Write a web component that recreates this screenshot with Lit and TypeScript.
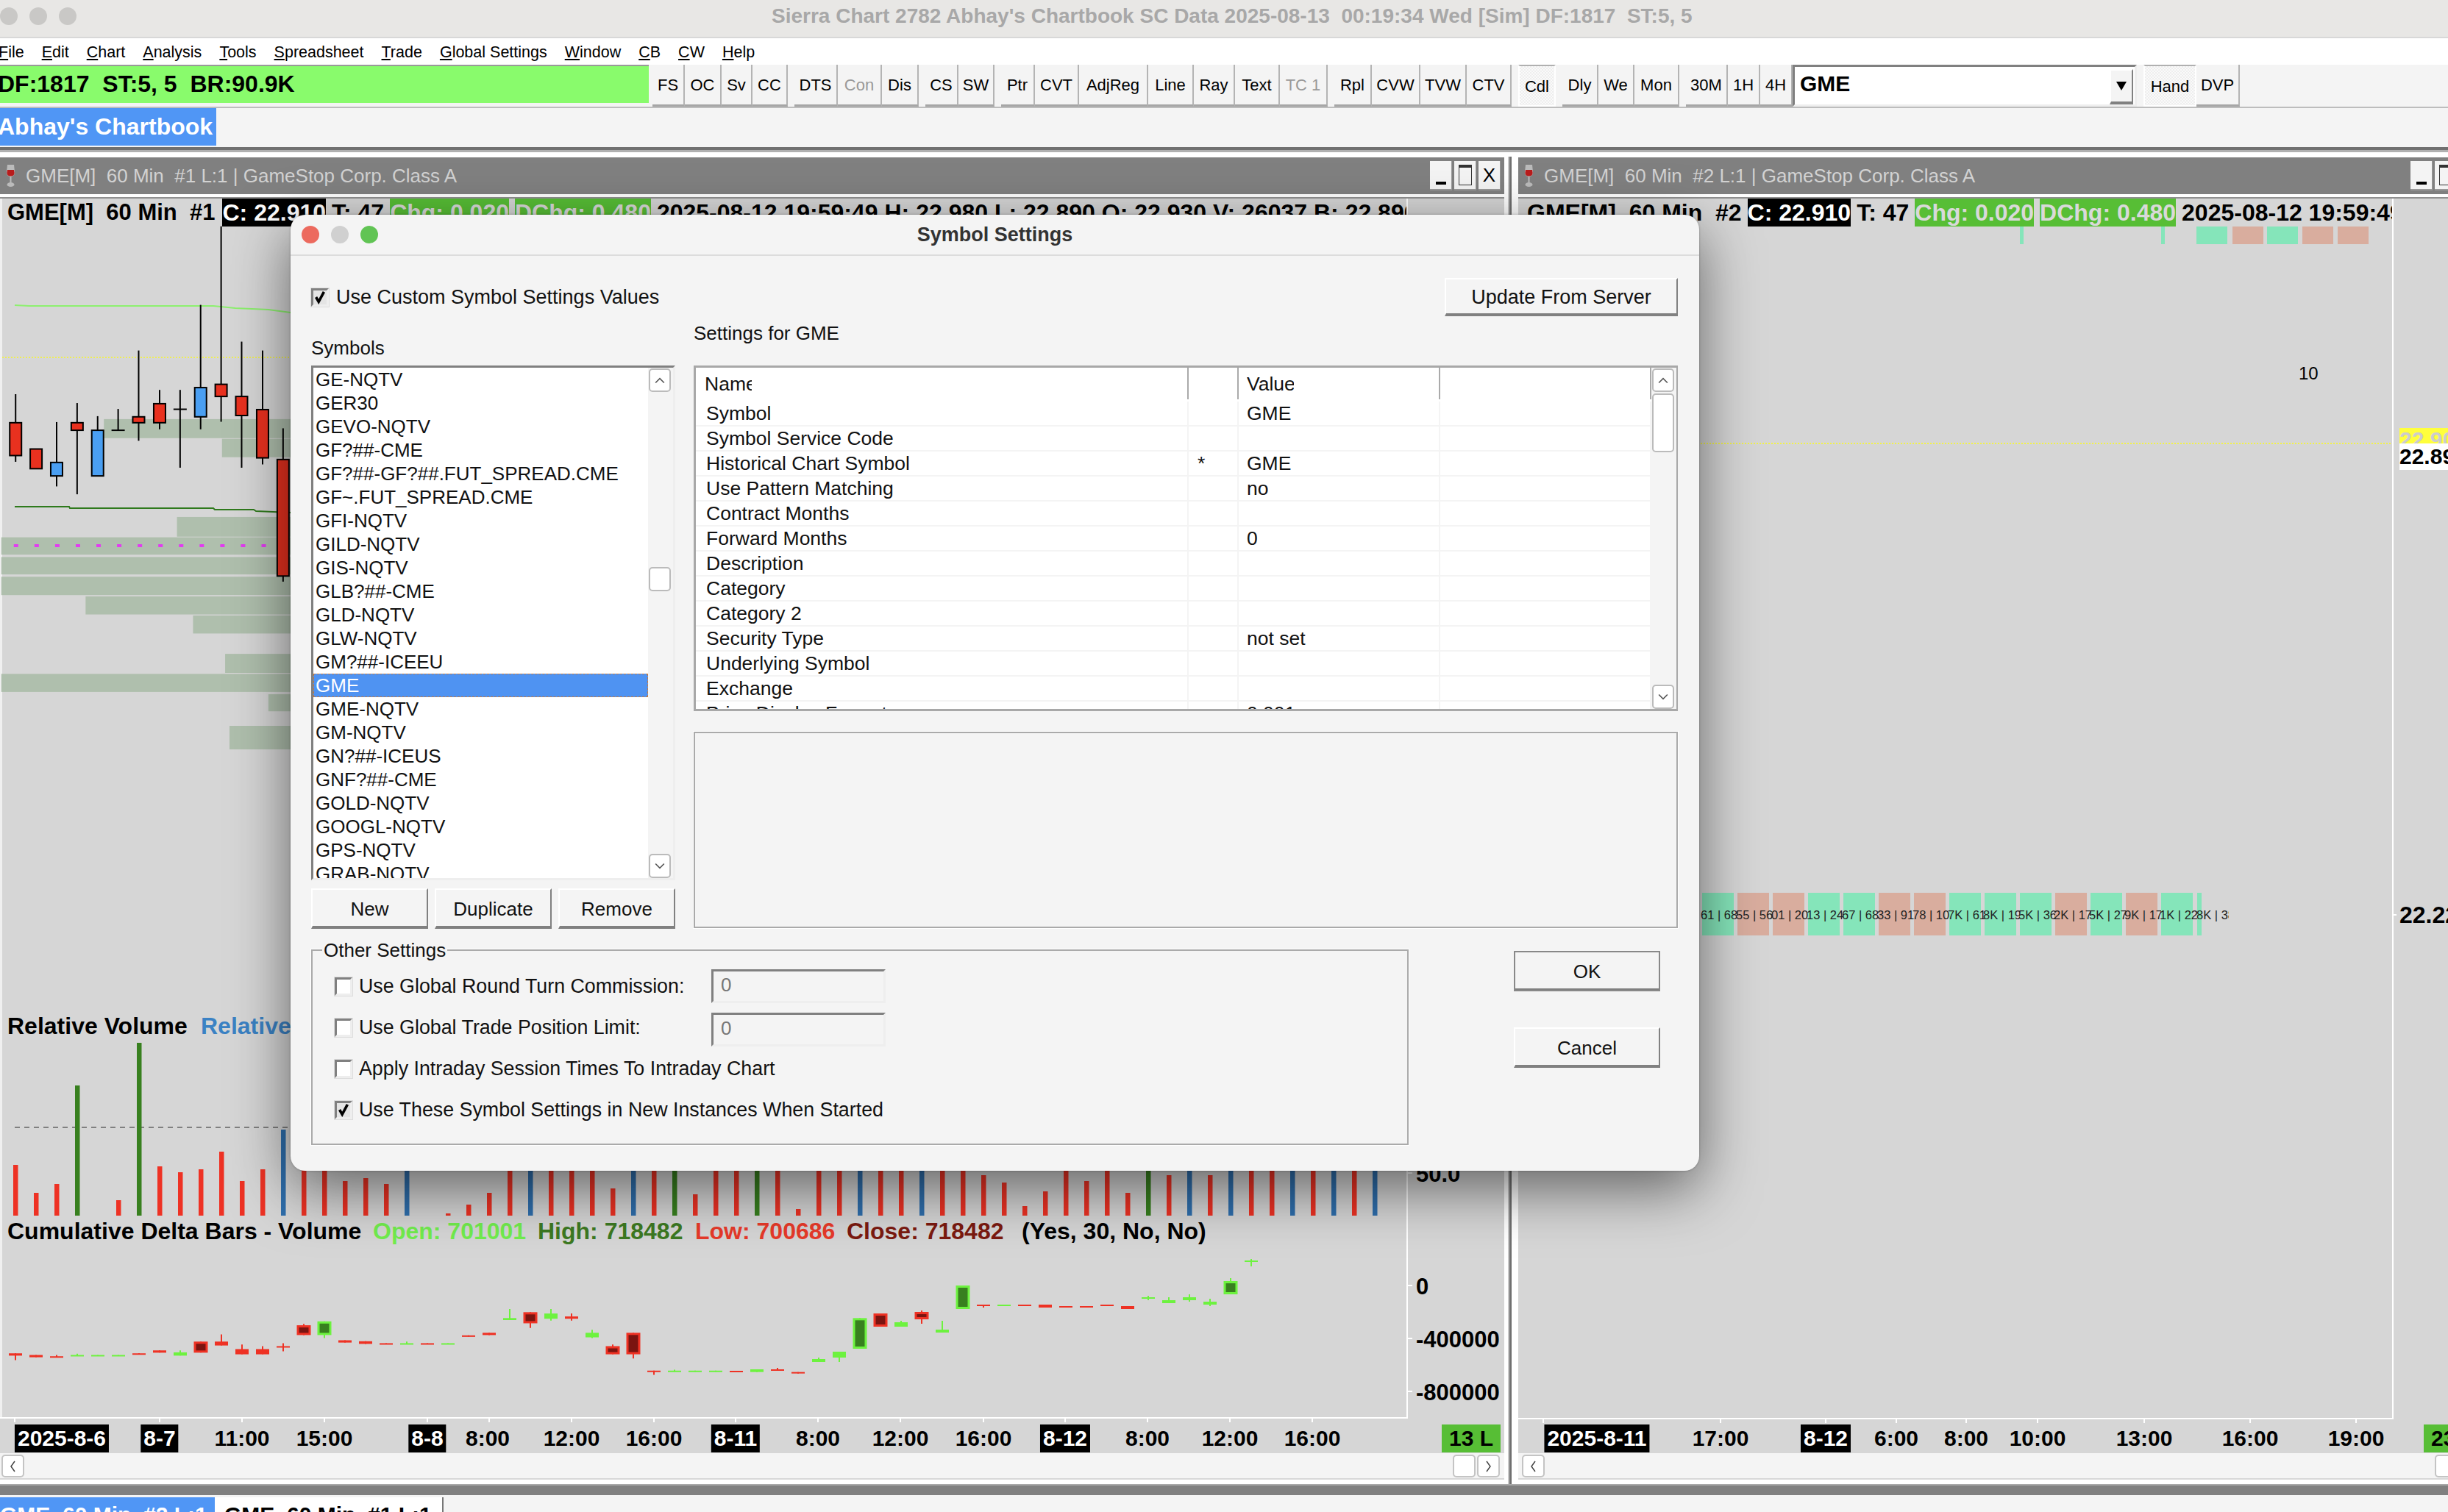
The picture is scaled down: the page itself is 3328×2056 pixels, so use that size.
import { LitElement, css, html, svg } from "lit";
import { customElement } from "lit/decorators.js";

type Btn = [string, number, string?];

const TOOL_GROUPS: Btn[][] = [
  [["FS", 44], ["OC", 50], ["Sv", 42], ["CC", 48]],
  [["DTS", 59], ["Con", 60, "off"], ["Dis", 50]],
  [["CS", 45], ["SW", 49]],
  [["Ptr", 46], ["CVT", 60], ["AdjReg", 94], ["Line", 62], ["Ray", 56], ["Text", 61], ["TC 1", 65, "off"]],
  [["Rpl", 51], ["CVW", 66], ["TVW", 63], ["CTV", 61]],
  [["Cdl", 51, "on"]],
  [["Dly", 49], ["We", 49], ["Mon", 61]],
];

const MENU = ["File", "Edit", "Chart", "Analysis", "Tools", "Spreadsheet", "Trade", "Global Settings", "Window", "CB", "CW", "Help"];

const SYMBOLS = [
  "GE-NQTV", "GER30", "GEVO-NQTV", "GF?##-CME", "GF?##-GF?##.FUT_SPREAD.CME", "GF~.FUT_SPREAD.CME", "GFI-NQTV", "GILD-NQTV",
  "GIS-NQTV", "GLB?##-CME", "GLD-NQTV", "GLW-NQTV", "GM?##-ICEEU", "GME", "GME-NQTV", "GM-NQTV", "GN?##-ICEUS", "GNF?##-CME",
  "GOLD-NQTV", "GOOGL-NQTV", "GPS-NQTV", "GRAB-NQTV",
];

const SETTINGS: [string, string, string][] = [
  ["Symbol", "", "GME"],
  ["Symbol Service Code", "", ""],
  ["Historical Chart Symbol", "*", "GME"],
  ["Use Pattern Matching", "", "no"],
  ["Contract Months", "", ""],
  ["Forward Months", "", "0"],
  ["Description", "", ""],
  ["Category", "", ""],
  ["Category 2", "", ""],
  ["Security Type", "", "not set"],
  ["Underlying Symbol", "", ""],
  ["Exchange", "", ""],
  ["Price Display Format", "", "0.001"],
];

// price candles, read off the reference: x, wick top, wick bottom, body top, body bottom, fill
const PRICE_Y = (z: number) => 290 + z / 2.24;
const PRICE_X = (z: number) => z / 1.65;
const CANDLES: [number, number, number, number, number, string][] = [
  [35, 551, 757, 638, 738, "#e9311f"],
  [81, 718, 778, 718, 778, "#e9311f"],
  [127, 636, 832, 759, 800, "#4a9ff2"],
  [173, 578, 856, 638, 661, "#e9311f"],
  [219, 618, 800, 661, 800, "#4a9ff2"],
  [265, 596, 661, 661, 661, "#000"],
  [311, 418, 693, 620, 638, "#e9311f"],
  [358, 538, 658, 580, 638, "#e9311f"],
  [404, 538, 775, 597, 597, "#000"],
  [450, 279, 658, 531, 620, "#4a9ff2"],
  [496, 40, 635, 521, 558, "#e9311f"],
  [542, 391, 775, 558, 616, "#e9311f"],
  [589, 418, 765, 598, 745, "#e9311f"],
  [635, 655, 1122, 750, 1105, "#e9311f"],
];
const PROFILE: [number, number, number][] = [
  [627, 685, 233], [687, 743, 498], [925, 985, 397], [987, 1040, 3], [1047, 1100, 3], [1107, 1163, 3],
  [1167, 1222, 192], [1225, 1280, 433], [1342, 1400, 505], [1403, 1458, 3], [1465, 1517, 602],
];

// relative volume bars: top in page px (null = no bar)
const VOL_TOPS: (number | null)[] = [
  1584, 1622, 1610, 1476, null, 1632, 1418, 1586, 1594, 1590, 1566, 1606, 1590, 1536, 1540, 1540, 1606, 1602, 1610, 1540, null,
  1650, 1638, 1622, 1540, 1540, 1540, 1540, 1540, 1616, 1540, 1540, 1540, 1624, 1540, 1540, 1540, 1540, 1644, 1540, 1540, 1540,
  1540, 1540, 1540, 1540, 1540, 1598, 1608, 1640, 1620, 1540, 1606, 1540, 1622, 1540, 1598, 1540, 1598, 1540, 1540, 1540, 1540, 1540,
  1540, 1540, 1540,
];
const VOL_COLOR: Record<number, string> = {
  3: "#38801f", 6: "#38801f", 13: "#2f6fad", 19: "#2f6fad", 25: "#2f6fad", 30: "#2f6fad", 32: "#38801f", 36: "#38801f",
  41: "#2f6fad", 44: "#2f6fad", 55: "#38801f", 57: "#2f6fad", 59: "#2f6fad", 62: "#2f6fad", 64: "#2f6fad", 66: "#2f6fad",
};

// cumulative delta candles: index, wick top, wick bottom, body top, body bottom, up
type Delta = [number, number, number, number, number, boolean];
const D1: Delta[] = [
  [0, 1082, 1103, 1082, 1089, false], [1, 1087, 1094, 1087, 1094, false], [2, 1087, 1094, 1091, 1094, false],
  [3, 1083, 1089, 1087, 1089, true], [4, 1087, 1089, 1087, 1089, true], [5, 1087, 1089, 1087, 1089, true],
  [6, 1082, 1085, 1082, 1085, false], [7, 1073, 1080, 1073, 1080, false], [8, 1073, 1089, 1079, 1089, true],
  [9, 1046, 1080, 1046, 1080, false], [10, 1024, 1058, 1046, 1058, false], [11, 1055, 1085, 1069, 1085, false],
  [12, 1060, 1085, 1069, 1085, false], [13, 1051, 1076, 1060, 1062, false], [14, 992, 1026, 996, 1026, false],
  [15, 984, 1035, 984, 1026, true], [16, 1042, 1049, 1042, 1049, false], [17, 1045, 1053, 1045, 1053, false],
  [18, 1051, 1053, 1051, 1053, false], [19, 1046, 1053, 1051, 1053, true], [20, 1051, 1053, 1051, 1053, false],
  [21, 1051, 1053, 1051, 1053, true], [22, 1027, 1031, 1027, 1031, false], [23, 1019, 1026, 1019, 1026, false],
  [24, 946, 980, 974, 980, true], [25, 956, 1004, 956, 990, false], [26, 946, 982, 960, 976, true],
  [27, 960, 982, 969, 976, false], [28, 1010, 1035, 1019, 1033, true], [29, 1055, 1085, 1060, 1085, false],
  [30, 1019, 1098, 1019, 1085, false], [31, 1135, 1148, 1135, 1139, false], [32, 1132, 1139, 1135, 1139, true],
  [33, 1135, 1139, 1135, 1139, true], [34, 1135, 1139, 1135, 1139, true],
];
const D2: Delta[] = [
  [35, 912, 916, 912, 916, false], [36, 906, 917, 906, 917, true], [37, 900, 912, 906, 912, false],
  [38, 917, 923, 917, 923, false], [39, 858, 876, 864, 876, true], [40, 834, 876, 834, 858, true],
  [41, 697, 822, 697, 822, true], [42, 678, 732, 678, 732, false], [43, 708, 732, 714, 732, true],
  [44, 666, 720, 672, 702, false], [45, 708, 756, 744, 756, true], [46, 564, 660, 564, 660, true],
  [47, 642, 654, 642, 648, false], [48, 642, 648, 642, 648, true], [49, 642, 648, 642, 648, false],
  [50, 642, 654, 642, 654, false], [51, 648, 654, 648, 654, false], [52, 648, 654, 648, 654, false],
  [53, 642, 648, 642, 648, false], [54, 648, 660, 648, 660, false], [55, 606, 624, 612, 618, true],
  [56, 612, 636, 624, 636, true], [57, 600, 630, 612, 624, true], [58, 618, 648, 630, 642, true],
  [59, 534, 600, 546, 600, true], [60, 456, 486, 462, 468, true],
];

type AxisLabel = [string, number, string?];
const LEFT_AXIS: AxisLabel[] = [
  ["2025-8-6", 84, "box"], ["8-7", 217, "box"], ["11:00", 329], ["15:00", 441], ["8-8", 581, "box"], ["8:00", 663],
  ["12:00", 777], ["16:00", 889], ["8-11", 1000, "box"], ["8:00", 1112], ["12:00", 1224], ["16:00", 1337],
  ["8-12", 1448, "box"], ["8:00", 1560], ["12:00", 1672], ["16:00", 1784], ["13 L", 2000, "live"],
];
const RIGHT_AXIS: AxisLabel[] = [
  ["2025-8-11", 2171, "box"], ["17:00", 2339], ["8-12", 2482, "box"], ["6:00", 2578], ["8:00", 2673], ["10:00", 2770],
  ["13:00", 2915], ["16:00", 3059], ["19:00", 3203], ["23 L", 3335, "live"],
];

const RIGHT_BARS: [string, string][] = [
  ["g", "61 | 68"], ["p", "55 | 56"], ["p", "01 | 20"], ["g", "13 | 24"], ["g", "67 | 68"], ["p", "33 | 91"], ["p", "78 | 10"],
  ["g", "7K | 61"], ["g", "8K | 19"], ["g", "5K | 36"], ["p", "2K | 17"], ["g", "5K | 27"], ["p", "9K | 17"], ["g", "1K | 22"],
];

const check = html`<svg class="tick" viewBox="0 0 20 20"><path d="M4 10l4 7 8-15" fill="none" stroke="#000" stroke-width="4" /></svg>`;
const chevron = (up: boolean) =>
  html`<svg viewBox="0 0 12 8" class="chev"><path d=${up ? "M1 7l5-5 5 5" : "M1 1l5 5 5-5"} fill="none" stroke="#555" stroke-width="1.4" /></svg>`;

@customElement("symbol-dialog")
class SymbolDialog extends LitElement {
  static styles = css`
    :host {
      position: absolute;
      left: 395px;
      top: 292px;
      width: 1915px;
      height: 1300px;
      display: flex;
      flex-direction: column;
      background: #f4f4f4;
      border-radius: 20px;
      box-shadow: 0 24px 80px rgba(0, 0, 0, 0.55), 0 0 3px rgba(0, 0, 0, 0.3);
      font-family: "Liberation Sans", sans-serif;
      font-size: 26px;
      color: #111;
    }
    .bar {
      height: 56px;
      flex: none;
      display: flex;
      align-items: center;
      border-bottom: 2px solid #dcdcdc;
      padding-left: 15px;
      box-sizing: border-box;
      gap: 16px;
      position: relative;
    }
    .light {
      width: 24px;
      height: 24px;
      border-radius: 50%;
      background: #d0d0d0;
    }
    .red { background: #ec6a5e; }
    .green { background: #61c454; }
    .caption {
      position: absolute;
      left: 0;
      right: 0;
      text-align: center;
      font-weight: bold;
      font-size: 27px;
      color: #333;
    }
    .body {
      padding: 30px 29px 0 28px;
      display: flex;
      flex-direction: column;
    }
    .top {
      height: 52px;
      display: flex;
      align-items: center;
      justify-content: space-between;
    }
    .check-row {
      display: flex;
      align-items: center;
      gap: 10px;
      white-space: pre;
      font-size: 27px;
    }
    .box {
      width: 24px;
      height: 25px;
      flex: none;
      box-sizing: border-box;
      background: #fff;
      border: 3px solid;
      border-color: #808080 #eee #eee #808080;
      outline: 1px solid #ddd;
      display: flex;
      align-items: center;
      justify-content: center;
    }
    .box.on { background: #e4e4e4; }
    .tick { width: 20px; height: 20px; }
    .btn {
      box-sizing: border-box;
      display: flex;
      align-items: center;
      justify-content: center;
      background: #f4f4f4;
      border: 2px solid;
      border-color: #fff #808080 #808080 #fff;
      border-bottom-width: 4px;
      padding-top: 3px;
    }
    .update { width: 317px; height: 52px; font-size: 27px; }
    .cols {
      display: grid;
      grid-template-columns: 495px 1338px;
      gap: 25px;
    }
    .col-l { display: flex; flex-direction: column; }
    .col-r { display: flex; flex-direction: column; }
    .lab-l { height: 67px; padding-top: 28px; box-sizing: border-box; }
    .lab-r { height: 67px; padding-top: 8px; box-sizing: border-box; }
    .list {
      height: 700px;
      box-sizing: border-box;
      position: relative;
      overflow: hidden;
      background: #fff;
      border: 3px solid;
      border-color: #808080 #eee #eee #808080;
      padding-right: 34px;
    }
    .item {
      height: 32px;
      line-height: 32px;
      padding-left: 3px;
      white-space: nowrap;
    }
    .item.sel {
      background: #4f93f2;
      color: #fff;
      box-sizing: border-box;
      outline: 1px dashed #c8793a;
      outline-offset: -1px;
    }
    .sb {
      position: absolute;
      top: 0;
      right: 0;
      bottom: 0;
      width: 34px;
      background: #f4f4f4;
    }
    .sb-btn {
      position: absolute;
      left: 1px;
      width: 30px;
      box-sizing: border-box;
      background: #fff;
      border: 2px solid #bbb;
      border-radius: 5px;
      display: flex;
      align-items: center;
      justify-content: center;
    }
    .chev { width: 14px; height: 10px; }
    .trio {
      display: flex;
      gap: 9px;
      margin-top: 11px;
    }
    .trio .btn { width: 159px; height: 55px; }
    .table {
      height: 470px;
      box-sizing: border-box;
      position: relative;
      overflow: hidden;
      background: #fff;
      border: 3px solid #a8a8a8;
      border-right-width: 2px;
      padding-right: 34px;
      font-size: 26.5px;
    }
    .row {
      display: grid;
      grid-template-columns: 670px 68px 274px 1fr;
      height: 34px;
      line-height: 33px;
      border-bottom: 2px solid #f4f4f4;
      box-sizing: border-box;
    }
    .row > span {
      padding-left: 14px;
      border-right: 2px solid #f4f4f4;
      white-space: nowrap;
      overflow: hidden;
    }
    .row > span:nth-child(2) { padding-left: 12px; }
    .row > span:nth-child(3) { padding-left: 11px; }
    .head {
      height: 43px;
      line-height: 44px;
      border-bottom: 0;
      margin-bottom: 3px;
    }
    .head > span { border-right-color: #aaa; }
    .head > span:first-child { padding-left: 12px; }
    .head .clip { display: block; width: 64px; overflow: hidden; }
    .notes {
      height: 267px;
      margin-top: 28px;
      box-sizing: border-box;
      border: 2px solid #aaa;
      outline: 1px solid #fff;
    }
    .lower {
      display: flex;
      margin-top: 28px;
    }
    .group {
      width: 1492px;
      height: 266px;
      box-sizing: border-box;
      border: 2px solid #aaa;
      outline: 1px solid #fff;
      padding: 20px 0 0 30px;
      position: relative;
      flex: none;
    }
    .legend {
      position: absolute;
      left: 13px;
      top: -16px;
      background: #f4f4f4;
      padding: 0 2px;
    }
    .opt {
      display: flex;
      align-items: center;
      height: 56px;
      gap: 9px;
      font-size: 26.8px;
    }
    .opt-label { width: 470px; white-space: nowrap; }
    .input {
      width: 237px;
      height: 46px;
      box-sizing: border-box;
      border: 3px solid;
      border-color: #808080 #eee #eee #808080;
      color: #777;
      padding-left: 10px;
      line-height: 36px;
      font-size: 26px;
    }
    .input.low { margin-top: 5px; }
    .actions {
      margin-left: 143px;
      padding-top: 2px;
      width: 199px;
      display: flex;
      flex-direction: column;
      gap: 49px;
    }
    .actions .btn { height: 55px; }
    .ok { outline: 2px solid #888; outline-offset: -2px; }
  `;

  render() {
    return html`
      <div class="bar">
        <span class="light red"></span><span class="light"></span><span class="light green"></span>
        <span class="caption">Symbol Settings</span>
      </div>
      <div class="body">
        <div class="top">
          <div class="check-row"><span class="box on">${check}</span>Use Custom Symbol Settings Values</div>
          <div class="btn update">Update From Server</div>
        </div>
        <div class="cols">
          <div class="col-l">
            <div class="lab-l">Symbols</div>
            <div class="list">
              ${SYMBOLS.map((s) => html`<div class="item ${s === "GME" ? "sel" : ""}">${s}</div>`)}
              <div class="sb">
                <div class="sb-btn" style="top:1px;height:32px">${chevron(true)}</div>
                <div class="sb-btn" style="top:271px;height:33px"></div>
                <div class="sb-btn" style="bottom:0;height:33px">${chevron(false)}</div>
              </div>
            </div>
            <div class="trio">
              <div class="btn">New</div>
              <div class="btn">Duplicate</div>
              <div class="btn">Remove</div>
            </div>
          </div>
          <div class="col-r">
            <div class="lab-r">Settings for GME</div>
            <div class="table">
              <div class="row head">
                <span><span class="clip">Name</span></span><span></span><span><span class="clip">Value</span></span><span></span>
              </div>
              ${SETTINGS.map(
                ([name, mark, value]) =>
                  html`<div class="row"><span>${name}</span><span>${mark}</span><span>${value}</span><span></span></div>`
              )}
              <div class="sb">
                <div class="sb-btn" style="top:1px;height:32px">${chevron(true)}</div>
                <div class="sb-btn" style="top:35px;height:80px"></div>
                <div class="sb-btn" style="bottom:0;height:33px">${chevron(false)}</div>
              </div>
            </div>
            <div class="notes"></div>
          </div>
        </div>
        <div class="lower">
          <div class="group">
            <span class="legend">Other Settings</span>
            <div class="opt"><span class="box"></span><span class="opt-label">Use Global Round Turn Commission:</span><div class="input">0</div></div>
            <div class="opt"><span class="box"></span><span class="opt-label">Use Global Trade Position Limit:</span><div class="input low">0</div></div>
            <div class="opt"><span class="box"></span><span class="opt-label">Apply Intraday Session Times To Intraday Chart</span></div>
            <div class="opt"><span class="box on">${check}</span><span class="opt-label">Use These Symbol Settings in New Instances When Started</span></div>
          </div>
          <div class="actions">
            <div class="btn ok">OK</div>
            <div class="btn">Cancel</div>
          </div>
        </div>
      </div>
    `;
  }
}

@customElement("app-root")
class AppRoot extends LitElement {
  static styles = css`
    :host {
      display: block;
      position: relative;
      width: 3328px;
      height: 2056px;
      overflow: hidden;
      background: #f4f4f4;
      font-family: "Liberation Sans", sans-serif;
      color: #000;
    }
    .titlebar {
      height: 52px;
      box-sizing: border-box;
      background: #e8e7e5;
      border-bottom: 2px solid #d8d8d8;
      padding-bottom: 6px;
      display: flex;
      align-items: center;
      gap: 16px;
    }
    .dot {
      width: 24px;
      height: 24px;
      border-radius: 50%;
      background: #c9c8c6;
    }
    .app-title {
      margin-left: 929px;
      font-size: 28px;
      font-weight: bold;
      color: #a8a8a8;
      white-space: pre;
    }
    .menu {
      height: 36px;
      box-sizing: border-box;
      padding-top: 3px;
      background: #fff;
      display: flex;
      align-items: center;
      gap: 24px;
      margin-left: -2px;
      font-size: 21.5px;
      white-space: pre;
    }
    .menu u { text-underline-offset: 2px; }
    .tools {
      height: 57px;
      display: flex;
      background: #f4f4f4;
      align-items: flex-start;
    }
    .status {
      width: 882px;
      height: 52px;
      box-sizing: border-box;
      background: #89fb6c;
      border-top: 2px solid #999;
      margin-right: 5px;
      font-size: 32px;
      font-weight: bold;
      line-height: 49px;
      white-space: pre;
      text-indent: -3px;
    }
    .groups { display: flex; gap: 9px; }
    .group { display: flex; }
    .tb {
      height: 57px;
      box-sizing: border-box;
      border-bottom: 3px solid #a6a6a6;
      border-right: 2px solid #b4b4b4;
      padding-top: 2px;
      font-size: 22px;
      display: flex;
      align-items: center;
      justify-content: center;
      white-space: nowrap;
    }
    .tb.off { color: #999; }
    .tb.on {
      border: 2px solid #fff;
      border-top-color: #b0b0b0;
      background: repeating-conic-gradient(#eee 0 25%, #fafafa 0 50%) 0 0 / 4px 4px;
    }
    .combo {
      width: 468px;
      height: 57px;
      box-sizing: border-box;
      background: #fff;
      border: 3px solid;
      border-color: #808080 #eee #eee #808080;
      position: relative;
      font-size: 30px;
      font-weight: bold;
      line-height: 46px;
      padding-left: 7px;
    }
    .drop {
      position: absolute;
      right: 2px;
      top: 3px;
      width: 32px;
      height: 48px;
      box-sizing: border-box;
      background: #f4f4f4;
      border: 2px solid;
      border-color: #fff #808080 #808080 #fff;
      border-bottom-width: 4px;
      display: flex;
      align-items: center;
      justify-content: center;
    }
    .drop svg { width: 14px; height: 12px; }
    .book {
      height: 55px;
      box-sizing: border-box;
      border-top: 2px solid #bdbdbd;
    }
    .book-tab {
      display: inline-block;
      width: 294px;
      height: 51px;
      background: #5096f5;
      color: #fff;
      font-size: 32px;
      font-weight: bold;
      line-height: 50px;
      white-space: nowrap;
      overflow: hidden;
      text-indent: -3px;
    }
    .rule {
      height: 13px;
      box-sizing: border-box;
      background: #fff;
      border-top: 4px solid #707070;
      box-shadow: inset 0 3px 0 #b0b0b0;
    }
    .panes {
      display: flex;
      height: 1805px;
      background: #fff;
    }
    .pane {
      display: flex;
      flex-direction: column;
      overflow: hidden;
      box-sizing: border-box;
    }
    .pane.left { width: 2050px; padding-right: 5px; }
    .pane.right { width: 1264px; }
    .divider {
      width: 14px;
      box-sizing: border-box;
      background: #fff;
      border-left: 2px solid #c8c8c8;
      border-right: 6px solid #fff;
      box-shadow: inset 3px 0 0 #707070;
    }
    .win-title {
      height: 50px;
      flex: none;
      margin-top: 1px;
      background: #808080;
      display: flex;
      align-items: center;
      color: #d2d2d2;
      font-size: 26px;
      white-space: pre;
      padding-left: 7px;
      gap: 13px;
    }
    .glass { width: 15px; height: 32px; flex: none; }
    .win-btns {
      margin-left: auto;
      display: flex;
      gap: 3px;
      padding-right: 5px;
    }
    .pane.right .win-btns { margin-right: -50px; }
    .win-btn {
      width: 30px;
      height: 40px;
      box-sizing: border-box;
      background: #f4f4f4;
      border-bottom: 2px solid #999;
      border-right: 1px solid #999;
      color: #000;
      display: flex;
      align-items: center;
      justify-content: center;
      font-size: 26px;
    }
    .win-btn .min { width: 14px; height: 4px; background: #000; margin-top: 22px; }
    .win-btn .max { width: 18px; height: 28px; box-sizing: border-box; border: 1px solid #333; border-top-width: 4px; }
    .sep {
      height: 6px;
      flex: none;
      background: #fff;
      border-bottom: 2px solid #909090;
      box-sizing: border-box;
    }
    .canvas {
      position: relative;
      height: 1706px;
      flex: none;
      overflow: hidden;
      background: #d6d6d6;
    }
    .plot {
      position: absolute;
      left: 0;
      top: 0;
    }
    .head {
      position: relative;
      height: 38px;
      display: flex;
      overflow: hidden;
      font-size: 32px;
      font-weight: bold;
      line-height: 38px;
      white-space: pre;
      gap: 8px;
    }
    .head.l { width: 1912px; padding-left: 10px; box-sizing: border-box; }
    .head.l .name { font-size: 31px; margin-right: 2px; }
    .head.r { width: 1188px; padding-left: 12px; box-sizing: border-box; }
    .head .blk { background: #000; color: #fff; }
    .head .grn { background: #57be35; color: #d9d9d9; }
    .abs {
      position: absolute;
      white-space: pre;
      font-size: 30px;
      font-weight: bold;
      line-height: 38px;
      transform: translate(-50%, 0);
    }
    .abs.box { background: #000; color: #fff; padding: 0 4px; }
    .abs.live { background: #57be35; padding: 0 10px; }
    .txt {
      position: absolute;
      white-space: pre;
      font-size: 32px;
      font-weight: bold;
      line-height: 36px;
    }
    .txt.scale { font-size: 31px; }
    .tag {
      position: absolute;
      font-size: 16.5px;
      white-space: pre;
      line-height: 58px;
      color: #222;
      overflow: hidden;
    }
    .hbar { position: absolute; height: 58px; }
    .g { background: #85e5ba; }
    .p { background: #d9ad9e; }
    .ten { position: absolute; font-size: 24px; line-height: 30px; }
    .y-flag {
      position: absolute;
      height: 21px;
      width: 70px;
      background: #ffff3c;
      overflow: hidden;
      color: #ccc;
      font-size: 30px;
      font-weight: bold;
      line-height: 32px;
    }
    .y-val {
      position: absolute;
      height: 36px;
      width: 70px;
      background: #fff;
      font-size: 30px;
      font-weight: bold;
      line-height: 36px;
      overflow: hidden;
    }
    .scroll {
      height: 34px;
      flex: none;
      background: #f4f4f4;
      position: relative;
      border-bottom: 2px solid #d8d8d8;
    }
    .scroll-btn {
      position: absolute;
      top: 2px;
      width: 31px;
      height: 31px;
      box-sizing: border-box;
      background: #fff;
      border: 2px solid #c4c4c4;
      border-radius: 5px;
      display: flex;
      align-items: center;
      justify-content: center;
    }
    .scroll-btn svg { width: 9px; height: 16px; }
    .strip {
      height: 15px;
      box-sizing: border-box;
      background: #808080;
      border-top: 2px solid #a8a8a8;
    }
    .tabs {
      height: 23px;
      overflow: hidden;
      background: #f4f4f4;
      display: flex;
      font-size: 30px;
      font-weight: bold;
      white-space: pre;
    }
    .tab {
      margin-top: 3px;
      height: 40px;
      line-height: 48px;
      box-sizing: border-box;
    }
    .tab.active { width: 292px; background: #5096f5; color: #fff; }
    .tab.idle { width: 311px; padding-left: 13px; background: #fff; border-right: 2px solid #777; }
  `;

  private glass() {
    return svg`<svg class="glass" viewBox="0 0 15 32">
      <path d="M3 1h9l1 10c0 4-2 6-5.5 6S2 15 2 11z" fill="#bbb"/>
      <path d="M3 8h9l.6 4c0 3-2 4.500-5.100 4.500S2.400 15 2.400 12z" fill="#b81c1c"/>
      <rect x="6.500" y="17" width="2" height="10" fill="#bbb"/><ellipse cx="7.500" cy="28" rx="5" ry="3" fill="#bbb"/></svg>`;
  }

  private winTitle(text: string) {
    return html`<div class="win-title">
      ${this.glass()}<span>${text}</span>
      <div class="win-btns">
        <div class="win-btn"><span class="min"></span></div>
        <div class="win-btn"><span class="max"></span></div>
        <div class="win-btn">X</div>
      </div>
    </div>`;
  }

  private header(side: string, name: string, rest: string) {
    return html`<div class="head ${side}">
      <span class="name">${name}</span><span class="blk">C: 22.910</span><span>T: 47</span><span class="grn">Chg: 0.020</span><span class="grn">DChg: 0.480</span><span>${rest}</span>
    </div>`;
  }

  private axis(labels: AxisLabel[], ox: number) {
    return labels.map(
      ([t, x, kind]) => html`<span class="abs ${kind ?? ""}" style="left:${x - ox}px;top:${1937 - 270}px">${t}</span>`
    );
  }

  private deltaShape(i: number, wt: number, wb: number, bt: number, bb: number, up: boolean) {
    const x = 21 + 28 * i;
    const bright = up ? "#6df23f" : "#ee3224";
    const dark = up ? "#38801f" : "#7a1410";
    const h = bb - bt;
    return svg`<line x1=${x} x2=${x} y1=${wt} y2=${wb} stroke=${bright} stroke-width="2"/>
      ${
        h < 9
          ? svg`<rect x=${x - 9} y=${bt} width="18" height=${Math.max(h, 2)} fill=${bright}/>`
          : svg`<rect x=${x - 8} y=${bt + 1.5} width="16" height=${h - 3} fill=${dark} stroke=${bright} stroke-width="3"/>`
      }`;
  }

  private leftPlot() {
    const y1 = (z: number) => 1360 + z / 2.253;
    const y2 = (z: number) => 1560 + z / 3;
    return svg`<svg class="plot" width="2045" height="1706" viewBox="0 270 2045 1706">
      <rect x="0" y="270" width="3" height="1658" fill="#f0f0f0"/>
      ${PROFILE.map(
        ([t, b, l]) => svg`<rect x=${PRICE_X(l)} y=${PRICE_Y(t)} width="1000" height=${(b - t) / 2.24} fill="#afbfad"/>`
      )}
      <rect x="312" y="987" width="600" height="32" fill="#afbfad"/>
      ${Array.from({ length: 13 }, (_, k) => svg`<rect x=${PRICE_X(31 + 46.300 * k)} y="740" width="6" height="4" fill="#e23cf0"/>`)}
      <polyline points="20,415 40,416 290,416 320,419 365,421 395,425 500,425" fill="none" stroke="#8df06f" stroke-width="2"/>
      <line x1="3" x2="500" y1="486" y2="486" stroke="#eeee55" stroke-width="2" stroke-dasharray="2 2"/>
      <polyline points="20,689 94,689 95,691 290,691 292,693 345,693 348,695 395,697" fill="none" stroke="#2f7a1d" stroke-width="2"/>
      ${CANDLES.map(([x, wt, wb, bt, bb, fill]) => {
        const cx = PRICE_X(x);
        const doji = bt === bb;
        return svg`<line x1=${cx} x2=${cx} y1=${PRICE_Y(wt)} y2=${PRICE_Y(wb)} stroke="#000" stroke-width="2"/>
          ${
            doji
              ? svg`<line x1=${cx - 9} x2=${cx + 9} y1=${PRICE_Y(bt)} y2=${PRICE_Y(bt)} stroke="#000" stroke-width="2"/>`
              : svg`<rect x=${cx - 8} y=${PRICE_Y(bt)} width="16" height=${(bb - bt) / 2.24} fill=${fill} stroke="#000" stroke-width="2"/>`
          }`;
      })}
      <line x1="20" x2="500" y1="1533" y2="1533" stroke="#808080" stroke-width="2" stroke-dasharray="7 6"/>
      ${VOL_TOPS.map((top, i) =>
        top === null
          ? ""
          : svg`<rect x=${21 + 28 * i - 3} y=${top} width="6.500" height=${1653 - top} fill=${VOL_COLOR[i] ?? "#ee3224"}/>`
      )}
      ${D1.map(([i, wt, wb, bt, bb, up]) => this.deltaShape(i, y1(wt), y1(wb), y1(bt), y1(bb), up))}
      ${D2.map(([i, wt, wb, bt, bb, up]) => this.deltaShape(i, y2(wt), y2(wb), y2(bt), y2(bb), up))}
      <path d="M1913 270V1928H0" fill="none" stroke="#fff" stroke-width="2"/>
      ${[20, 217, 329, 441, 581, 665, 777, 889, 1000, 1112, 1224, 1337, 1448, 1560, 1672, 1784].map(
        (x) => svg`<line x1=${x} x2=${x} y1="1928" y2="1934" stroke="#fff" stroke-width="2"/>`
      )}
      ${[1595, 1748, 1820, 1892].map((y) => svg`<line x1="1913" x2="1920" y1=${y} y2=${y} stroke="#fff" stroke-width="2"/>`)}
    </svg>`;
  }

  private rightPlot() {
    const tops: [number, number, string][] = [
      [2746, 5, "#85e5ba"], [2938, 5, "#85e5ba"], [2986, 42, "#85e5ba"], [3035, 42, "#d9ad9e"], [3082, 42, "#85e5ba"],
      [3130, 42, "#d9ad9e"], [3178, 42, "#d9ad9e"],
    ];
    return svg`<svg class="plot" width="1264" height="1706" viewBox="2064 270 1264 1706">
      ${tops.map(([x, w, c]) => svg`<rect x=${x} y="308" width=${w} height="24" fill=${c}/>`)}
      <line x1="2064" x2="3252" y1="603" y2="603" stroke="#f2f24a" stroke-width="2" stroke-dasharray="2 2"/>
      <path d="M3253 270V1929H2064" fill="none" stroke="#fff" stroke-width="2"/>
      ${[2098, 2339, 2482, 2578, 2673, 2770, 2915, 3059, 3203].map(
        (x) => svg`<line x1=${x} x2=${x} y1="1929" y2="1935" stroke="#fff" stroke-width="2"/>`
      )}
      <line x1="3253" x2="3258" y1="1244" y2="1244" stroke="#fff" stroke-width="2"/>
    </svg>`;
  }

  private arrow(left: boolean) {
    return html`<svg viewBox="0 0 9 16"><path d=${left ? "M7 1L2 8l5 7" : "M2 1l5 7-5 7"} fill="none" stroke="#444" stroke-width="1.5" /></svg>`;
  }

  render() {
    return html`
      <div class="titlebar">
        <span class="dot"></span><span class="dot"></span><span class="dot"></span>
        <span class="app-title">Sierra Chart 2782 Abhay's Chartbook SC Data 2025-08-13  00:19:34 Wed [Sim] DF:1817  ST:5, 5</span>
      </div>
      <div class="menu">${MENU.map((m) => html`<span><u>${m[0]}</u>${m.slice(1)}</span>`)}</div>
      <div class="tools">
        <div class="status">DF:1817  ST:5, 5  BR:90.9K</div>
        <div class="groups">
          ${TOOL_GROUPS.map(
            (g) => html`<div class="group">
              ${g.map(([t, w, k]) => html`<div class="tb ${k ?? ""}" style="width:${w}px">${t}</div>`)}
            </div>`
          )}
          <div class="group">
            ${[["30M", 57], ["1H", 44], ["4H", 44]].map(([t, w]) => html`<div class="tb" style="width:${w}px">${t}</div>`)}
            <div class="combo">
              GME
              <div class="drop"><svg viewBox="0 0 14 12"><path d="M0 0h14L7 12z" fill="#000" /></svg></div>
            </div>
          </div>
          <div class="group">
            <div class="tb on" style="width:72px">Hand</div>
            <div class="tb" style="width:59px">DVP</div>
          </div>
        </div>
      </div>
      <div class="book"><span class="book-tab">Abhay's Chartbook</span></div>
      <div class="rule"></div>
      <div class="panes">
        <div class="pane left">
          ${this.winTitle("GME[M]  60 Min  #1 L:1 | GameStop Corp. Class A")}
          <div class="sep"></div>
          <div class="canvas">
            ${this.leftPlot()}
            ${this.header("l", "GME[M]  60 Min  #1", "2025-08-12 19:59:49 H: 22.980 L: 22.890 O: 22.930 V: 26037 B: 22.890")}
            <span class="txt" style="left:10px;top:1107px">Relative Volume</span>
            <span class="txt" style="left:273px;top:1107px;color:#3b82c4">Relative Volume</span>
            <span class="txt" style="left:10px;top:1386px">Cumulative Delta Bars - Volume</span>
            <span class="txt" style="left:507px;top:1386px;color:#72ee4e">Open: 701001</span>
            <span class="txt" style="left:731px;top:1386px;color:#3d7a22">High: 718482</span>
            <span class="txt" style="left:945px;top:1386px;color:#e83a2a">Low: 700686</span>
            <span class="txt" style="left:1151px;top:1386px;color:#7c1a10">Close: 718482</span>
            <span class="txt" style="left:1389px;top:1386px">(Yes, 30, No, No)</span>
            <span class="txt scale" style="left:1925px;top:1309px">50.0</span>
            <span class="txt scale" style="left:1925px;top:1462px">0</span>
            <span class="txt scale" style="left:1925px;top:1534px">-400000</span>
            <span class="txt scale" style="left:1925px;top:1606px">-800000</span>
            ${this.axis(LEFT_AXIS, 0)}
          </div>
          <div class="scroll">
            <div class="scroll-btn" style="left:2px">${this.arrow(true)}</div>
            <div class="scroll-btn" style="left:1975px">&nbsp;</div>
            <div class="scroll-btn" style="left:2008px">${this.arrow(false)}</div>
          </div>
        </div>
        <div class="divider"></div>
        <div class="pane right">
          ${this.winTitle("GME[M]  60 Min  #2 L:1 | GameStop Corp. Class A")}
          <div class="sep"></div>
          <div class="canvas">
            ${this.rightPlot()}
            ${this.header("r", "GME[M]  60 Min  #2", "2025-08-12 19:59:49 H: 22.980 L: 22.890")}
            <span class="ten" style="left:${3125 - 2064}px;top:${493 - 270}px">10</span>
            <div class="y-flag" style="left:${3262 - 2064}px;top:${582 - 270}px">22.90</div>
            <div class="y-val" style="left:${3262 - 2064}px;top:${603 - 270}px">22.890</div>
            ${RIGHT_BARS.map(
              ([c, t], i) => html`<div class="hbar ${c}" style="left:${2314 - 2064 + 48 * i}px;top:${1214 - 270}px;width:43px"></div>
                <span class="tag" style="left:${2314 - 2064 + 48 * i - 2}px;top:${1215 - 270}px">${t}</span>`
            )}
            <div class="hbar g" style="left:${2987 - 2064}px;top:${1214 - 270}px;width:6px"></div>
            <span class="tag" style="left:${2986 - 2064}px;top:${1215 - 270}px;width:44px">8K | 38</span>
            <span class="txt" style="left:${3262 - 2064}px;top:${1226 - 270}px">22.22</span>
            ${this.axis(RIGHT_AXIS, 2064)}
          </div>
          <div class="scroll">
            <div class="scroll-btn" style="left:5px">${this.arrow(true)}</div>
            <div class="scroll-btn" style="left:1246px">&nbsp;</div>
          </div>
        </div>
      </div>
      <div class="strip"></div>
      <div class="tabs">
        <div class="tab active">GME  60 Min  #2 L:1</div>
        <div class="tab idle">GME  60 Min  #1 L:1</div>
      </div>
      <symbol-dialog></symbol-dialog>
    `;
  }
}
